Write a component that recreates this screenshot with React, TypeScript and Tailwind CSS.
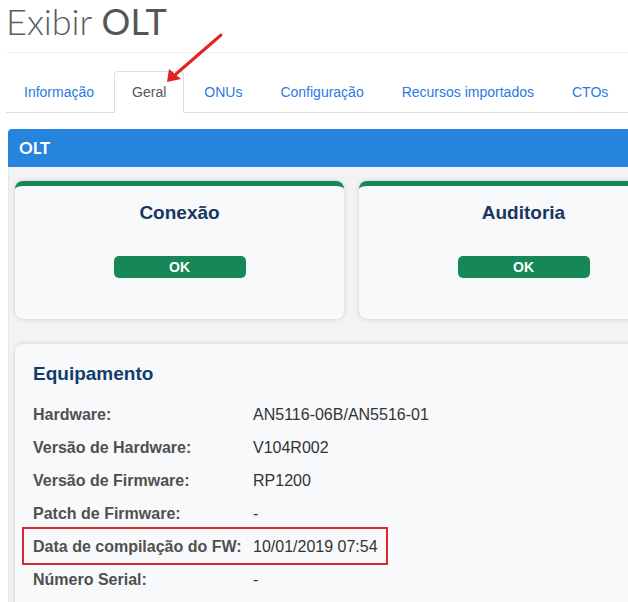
import React from 'react';

const tabs = ['Informação', 'Geral', 'ONUs', 'Configuração', 'Recursos importados', 'CTOs'];

const equipamento = [
  { label: 'Hardware:', value: 'AN5116-06B/AN5516-01' },
  { label: 'Versão de Hardware:', value: 'V104R002' },
  { label: 'Versão de Firmware:', value: 'RP1200' },
  { label: 'Patch de Firmware:', value: '-' },
  { label: 'Data de compilação do FW:', value: '10/01/2019 07:54', marked: true },
  { label: 'Número Serial:', value: '-' },
];

function StatusCard({ title }: { title: string }) {
  return (
    <div className="flex flex-col items-center rounded-lg border-t-[5px] border-[#178758] bg-[#f8f9fa] pt-[15px] pb-[41px] shadow-[0_0_5px_rgba(0,0,0,0.15)]">
      <h3 className="text-[19px] leading-[24px] font-bold text-[#19365f]">{title}</h3>
      <div className="mt-[31px] flex h-[22px] w-[132px] items-center justify-center rounded-[5px] bg-[#178758] text-[14px] font-bold text-white">
        OK
      </div>
    </div>
  );
}

export default function App() {
  return (
    <div className="relative h-[602px] w-[628px] overflow-hidden bg-white font-['Liberation_Sans',Arial,sans-serif]">
      <div className="w-[1100px] pl-[6px]">
        <h1 className="-mt-px font-['Lato',sans-serif] text-[36px] leading-[44px] text-[#555]">
          <span className="font-light text-[#5c5c5c]">Exibir</span> <span className="font-normal">OLT</span>
        </h1>
        <div className="mt-[9px] border-t border-[#eeeeee]" />

        <ul className="mt-[18px] flex border-b border-[#dddddd]">
          {tabs.map((t) => (
            <li key={t} className="mr-[2px] -mb-px">
              <span
                className={
                  t === 'Geral'
                    ? 'block rounded-t border border-[#dddddd] border-b-white bg-white px-[17px] py-[10px] text-[14px] leading-[20px] text-[#555]'
                    : 'block border border-transparent px-[17px] py-[10px] text-[14px] leading-[20px] text-[#2a7ae2]'
                }
              >
                {t}
              </span>
            </li>
          ))}
        </ul>

        <div className="mt-[16px] ml-[2px]">
          <div className="flex h-[38px] items-center rounded-t-[4px] bg-[#2784dc] px-[11px] font-['Lato',sans-serif] text-[17px] font-bold text-white">
            OLT
          </div>
          <div className="bg-[#f3f3f3] px-[7px] pt-[14px] pb-[20px] shadow-[inset_1px_0_2px_rgba(0,0,0,0.06)]">
            <div className="grid grid-cols-[329px_329px] gap-[15px]">
              <StatusCard title="Conexão" />
              <StatusCard title="Auditoria" />
            </div>

            <div className="mt-[25px] rounded-lg bg-[#f8f9fa] px-[18px] pt-[18px] pb-[20px] shadow-[0_0_5px_rgba(0,0,0,0.15)]">
              <h2 className="text-[19px] leading-[24px] font-bold text-[#123d6b]">Equipamento</h2>
              <div className="mt-[12px]">
                {equipamento.map((row) => (
                  <div key={row.label} className="relative flex h-[33px] items-center text-[16px]">
                    <span className="w-[220px] font-bold text-[#505050]">{row.label}</span>
                    <span className="text-[#333]">{row.value}</span>
                    {row.marked && (
                      <div className="absolute top-[-3px] left-[-11px] h-[38px] w-[366px] border-2 border-[#e0262b]" />
                    )}
                  </div>
                ))}
              </div>
            </div>
          </div>
        </div>
      </div>

      <svg className="absolute top-0 left-0" width="628" height="120" viewBox="0 0 628 120">
        <line x1="221" y1="35" x2="176" y2="74" stroke="#e02424" strokeWidth="3" strokeLinecap="round" />
        <polygon points="167,82 169,69 181,79" fill="#e02424" />
      </svg>
    </div>
  );
}
